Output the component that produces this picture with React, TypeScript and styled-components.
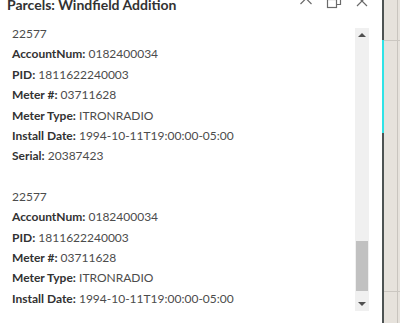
import React from 'react';
import styled, { createGlobalStyle } from 'styled-components';

const GlobalStyle = createGlobalStyle`
  html, body {
    margin: 0;
    padding: 0;
    background: #fff;
    overflow: hidden;
  }
  body {
    font-family: Lato, "Open Sans", sans-serif;
  }
`;

const Screen = styled.div`
  display: flex;
  width: 400px;
  height: 323px;
  overflow: hidden;
`;

const Panel = styled.section`
  display: flex;
  flex-direction: column;
  width: 382px;
  height: 323px;
  background: #fff;
`;

const Header = styled.header`
  display: flex;
  align-items: flex-start;
  height: 22px;
  margin-top: -5px;
  padding: 0 0 0 7px;
`;

const Title = styled.h2`
  flex: 1;
  margin: 0;
  font-size: 14px;
  line-height: 20px;
  font-weight: 700;
  color: #323232;
  white-space: nowrap;
`;

const Actions = styled.div`
  display: flex;
  gap: 12px;
  margin-top: -4px;
  padding-right: 12px;
`;

const IconButton = styled.button`
  display: flex;
  align-items: center;
  justify-content: center;
  width: 16px;
  height: 20px;
  padding: 0;
  border: 0;
  background: none;
  color: #6a6a6a;
`;

const Body = styled.div`
  display: flex;
  align-items: flex-start;
  flex: 1;
  min-height: 0;
  padding-top: 7px;
`;

const Content = styled.div`
  flex: 1;
  height: 285px;
  padding-left: 12px;
  overflow: hidden;
`;

const Record = styled.div`
  margin-bottom: 20px;
`;

const Line = styled.div`
  font-size: 12px;
  line-height: 20.4px;
  color: #4c4c4c;
  white-space: nowrap;
`;

const Label = styled.b`
  font-weight: 700;
  color: #323232;
`;

const Scrollbar = styled.div`
  display: flex;
  flex-direction: column;
  width: 14px;
  height: 283px;
  margin: 4px 13px 0 0;
  background: #f0f0f0;
`;

const Arrow = styled.div<{ $down?: boolean }>`
  display: flex;
  align-items: center;
  justify-content: center;
  height: 14px;
  &::before {
    content: '';
    border-left: 4px solid transparent;
    border-right: 4px solid transparent;
    ${(p) => (p.$down ? 'border-top: 4px solid #505050;' : 'border-bottom: 4px solid #505050;')}
  }
`;

const Track = styled.div`
  flex: 1;
  display: flex;
  flex-direction: column;
  justify-content: flex-end;
  padding: 0 1px 6px 1px;
`;

const Thumb = styled.div`
  height: 50px;
  background: #c1c1c1;
`;

const MapStrip = styled.div`
  position: relative;
  flex: 1;
  background: #e6e2dc;
  border-left: 2px solid #4d5353;
`;

const Highlight = styled.div`
  position: absolute;
  left: -2px;
  top: 40px;
  width: 2px;
  height: 93px;
  background: #2fe3e6;
`;

const GridLineV = styled.div`
  position: absolute;
  left: 13px;
  top: 0;
  bottom: 0;
  width: 1px;
  background: #c9c5bf;
`;

const GridLineH = styled.div<{ $top: number }>`
  position: absolute;
  left: 0;
  right: 0;
  top: ${(p) => p.$top}px;
  height: 1px;
  background: #cbc7c1;
`;

type Field = [string, string];

const fields: Field[] = [
  ['AccountNum', '0182400034'],
  ['PID', '1811622240003'],
  ['Meter #', '03711628'],
  ['Meter Type', 'ITRONRADIO'],
  ['Install Date', '1994-10-11T19:00:00-05:00'],
  ['Serial', '20387423'],
];

const records: { id: string; fields: Field[] }[] = [
  { id: '22577', fields },
  { id: '22577', fields },
];

const App = (): React.ReactElement => {
  return (
    <Screen>
      <GlobalStyle />
      <Panel>
        <Header>
          <Title>Parcels: Windfield Addition</Title>
          <Actions>
            <IconButton aria-label="Collapse">
              <svg width="14" height="14" viewBox="0 0 14 14" fill="none" stroke="currentColor" strokeWidth="1.2">
                <path d="M1.5 10 L7 4.5 L12.5 10" />
              </svg>
            </IconButton>
            <IconButton aria-label="Dock">
              <svg width="16" height="16" viewBox="0 0 16 16" fill="none" stroke="currentColor" strokeWidth="1.2">
                <rect x="1.5" y="6.5" width="9" height="8" />
                <path d="M5.5 6.5 V3.5 H14.5 V11.5 H10.5" />
              </svg>
            </IconButton>
            <IconButton aria-label="Close">
              <svg width="14" height="14" viewBox="0 0 14 14" fill="none" stroke="currentColor" strokeWidth="1.2">
                <path d="M2 2 L12 12 M12 2 L2 12" />
              </svg>
            </IconButton>
          </Actions>
        </Header>
        <Body>
          <Content>
            {records.map((r, i) => (
              <Record key={i}>
                <Line>{r.id}</Line>
                {r.fields.map(([k, v]) => (
                  <Line key={k}>
                    <Label>{k}:</Label> {v}
                  </Line>
                ))}
              </Record>
            ))}
          </Content>
          <Scrollbar>
            <Arrow />
            <Track>
              <Thumb />
            </Track>
            <Arrow $down />
          </Scrollbar>
        </Body>
      </Panel>
      <MapStrip>
        <Highlight />
        <GridLineV />
        <GridLineH $top={40} />
        <GridLineH $top={291} />
      </MapStrip>
    </Screen>
  );
};

export default App;
